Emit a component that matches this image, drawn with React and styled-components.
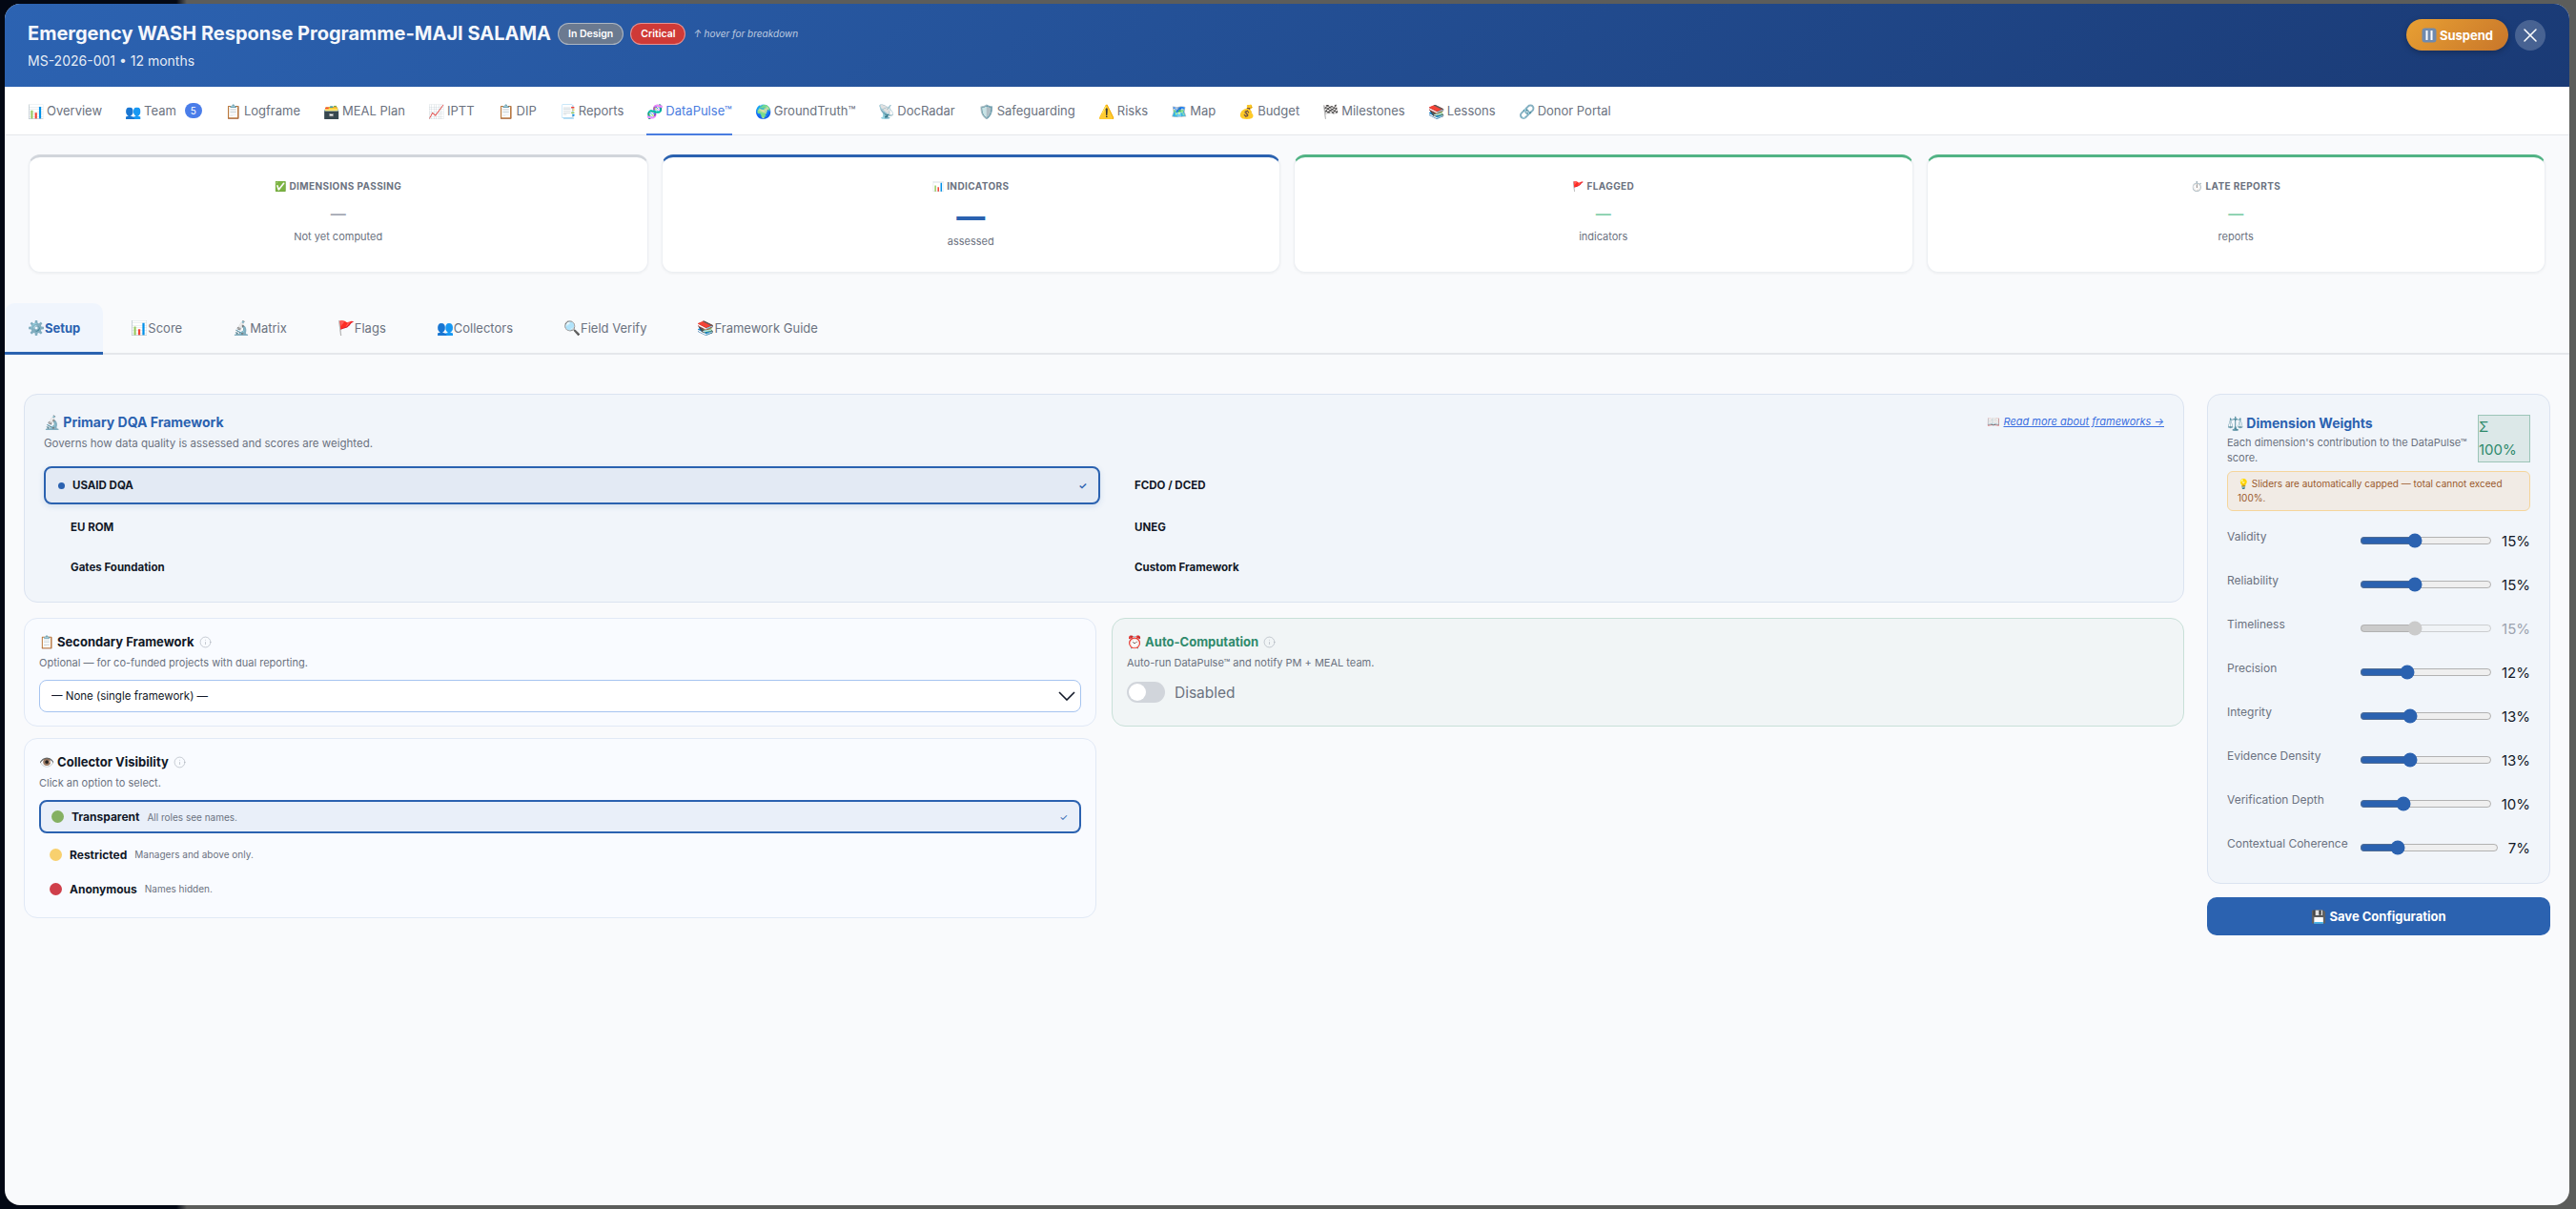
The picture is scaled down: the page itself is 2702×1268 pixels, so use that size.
import React from "react";
import styled, { createGlobalStyle } from "styled-components";
import { X, Info } from "lucide-react";

const Global = createGlobalStyle`
  html, body { margin: 0; padding: 0; height: 100%; }
  body { font-family: Inter, "Noto Sans", sans-serif; color: #111827; overflow: hidden; }
  * { box-sizing: border-box; }
`;

const Backdrop = styled.div`
  width: 2702px; height: 1268px; padding: 4px 7px 4px 5px;
  background: linear-gradient(to right, #030814 0, #030814 185px, #5c5d5b 196px);
`;
const Modal = styled.div`
  height: 100%; border-radius: 16px; overflow: hidden; background: #f9fafc;
  display: flex; flex-direction: column;
`;
const Header = styled.header`
  height: 87px; padding: 16px 25px 0 24px; display: flex; justify-content: space-between; align-items: flex-start;
  background: linear-gradient(135deg, #2c63b2, #1a3a75); color: #fff;
`;
const TitleLine = styled.div`display: flex; align-items: center; gap: 7px; height: 30px;`;
const Title = styled.h1`margin: 0; font-size: 20px; font-weight: 700; color: #f4f7fc;`;
const Badge = styled.span`
  font-size: 10.5px; font-weight: 600; height: 23px; padding: 0 10px; border-radius: 12px; display: inline-flex; align-items: center;
  color: #fff; background: ${p => p.$bg}; border: 1px solid rgba(255,255,255,.45);
`;
const Hover = styled.span`font-size: 10px; font-style: italic; color: rgba(255,255,255,.7); margin-left: 1px;`;
const SubLine = styled.div`font-size: 14px; margin-top: 5px; color: rgba(255,255,255,.9);`;
const HeadActions = styled.div`display: flex; align-items: center; gap: 7px;`;
const Suspend = styled.button`
  height: 33px; width: 107px; border: 0; border-radius: 17px; color: #fff; font: 700 13px Inter, sans-serif;
  background: linear-gradient(135deg, #e8a033, #c8762a); box-shadow: 0 2px 6px rgba(0,0,0,.25);
  display: flex; align-items: center; justify-content: center; gap: 3px; padding: 0;
`;
const CloseBtn = styled.button`
  width: 32px; height: 32px; border-radius: 50%; border: 0; color: #fff; background: rgba(255,255,255,.2);
  display: flex; align-items: center; justify-content: center; padding: 0;
`;
const Nav = styled.nav`
  height: 50px; margin-top: 1px; background: #fff; border-bottom: 1px solid #e5e7eb; display: flex; gap: 24px; padding: 0 24px;
`;
const NavItem = styled.div`
  display: flex; align-items: center; font-size: 13px; font-weight: 400; margin-bottom: -1px;
  color: ${p => p.$active ? "#4a7de0" : "#6b7280"};
  border-bottom: 2px solid ${p => p.$active ? "#4a7de0" : "transparent"};
`;
const NavEmoji = styled.span`font-size: 14px; margin-right: 3px;`;
const Count = styled.span`
  width: 18px; height: 16px; border-radius: 8px; background: #4a7de9; color: #fff; font-size: 10px;
  display: inline-flex; align-items: center; justify-content: center; margin-left: 9px;
`;
const Kpis = styled.section`display: grid; grid-template-columns: repeat(4, 1fr); gap: 14px; padding: 20px 25px 0;`;
const Kpi = styled.div`
  height: 124px; background: #fff; border-radius: 12px; border: 1px solid #eceff3; border-top: 3px solid ${p => p.$c};
  box-shadow: 0 1px 3px rgba(0,0,0,.05); display: flex; flex-direction: column; align-items: center; padding-top: 22px;
`;
const KpiLabel = styled.div`font-size: 10px; font-weight: 700; letter-spacing: .4px; color: #6b7280; text-transform: uppercase; height: 16px; display:flex; align-items:center; white-space: pre;`;
const KpiValue = styled.div`
  font-size: ${p => p.$big ? 30 : 16}px; font-weight: ${p => p.$big ? 800 : 700}; color: ${p => p.$c}; line-height: ${p => p.$big ? 31 : 24}px; margin-top: 9px;
`;
const KpiSub = styled.div`font-size: 11px; color: #6b7280; margin-top: ${p => p.$big ? 3 : 5}px;`;
const SubTabs = styled.div`display: flex; gap: 5px; margin-top: 32px; border-bottom: 2px solid #e5e7eb; height: 54px;`;
const SubTab = styled.div`
  padding: 0 24px; display: flex; align-items: center; font-size: 13px; font-weight: ${p => p.$active ? 700 : 400};
  color: ${p => p.$active ? "#2b62b0" : "#6b7280"}; border-radius: 10px 10px 0 0; margin-bottom: -2px;
  background: ${p => p.$active ? "#f0f5fd" : "transparent"}; border-bottom: 3px solid ${p => p.$active ? "#2b62b0" : "transparent"};
`;
const SubEmoji = styled.span`font-size: 14.5px;`;
const Body = styled.div`display: grid; grid-template-columns: 1fr 360px; gap: 24px; padding: 41px 20px 0;`;
const LeftCol = styled.div`display: grid; grid-template-columns: 1fr 1fr; gap: 12px 16px; align-items: start; align-content: start;`;
const Panel = styled.section`
  grid-column: ${p => p.$wide ? "1 / -1" : "auto"}; border-radius: 14px; border: 1px solid ${p => p.$bd || "#e1e9f6"};
  background: ${p => p.$bg || "#f9fbff"}; padding: ${p => p.$pad || "15px 15px 14px"};
  height: ${p => p.$h}px; margin-bottom: ${p => p.$wide ? 4 : 0}px;
`;
const PanelHead = styled.div`display: flex; justify-content: space-between; align-items: center;`;
const PanelTitle = styled.h3`
  margin: 0; font-size: ${p => p.$s || 13}px; font-weight: 700; color: ${p => p.$c || "#111827"}; display: flex; align-items: center; height: 18px; white-space: pre;
`;
const Muted = styled.p`margin: ${p => p.$m || "5px 0 0"}; font-size: ${p => p.$s || 11}px; color: #6b7280; line-height: ${p => p.$lh || "16px"};`;
const LinkRow = styled.span`font-size: 11px;`;
const Link = styled.a`font-size: 11px; font-style: italic; color: #3b6fe0; text-decoration: underline;`;
const OptionGrid = styled.div`display: grid; grid-template-columns: 1fr 1fr; gap: 6px 8px; margin-top: 16px; align-items: center;`;
const FrameOption = styled.div`
  height: ${p => p.$sel ? 40 : 36}px; border-radius: 8px; display: flex; align-items: center; gap: 8px; font-size: 11.5px; font-weight: 700;
  padding: 0 12px 0 ${p => p.$sel ? 13 : 26}px; color: #111827;
  border: 2px solid ${p => p.$sel ? "#2b62b0" : "transparent"}; background: ${p => p.$sel ? "#e3eaf4" : "transparent"};
  box-shadow: ${p => p.$sel ? "0 2px 6px rgba(43,98,176,.15)" : "none"};
`;
const Dot = styled.span`width: ${p => p.$s}px; height: ${p => p.$s}px; border-radius: 50%; background: ${p => p.$c}; flex: none;`;
const Check = styled.span`margin-left: auto; color: #2b62b0; font-size: 10px;`;
const SelectWrap = styled.div`position: relative; margin-top: 10px;`;
const Select = styled.select`
  width: 100%; height: 34px; appearance: none; background: #fff; border: 1.5px solid #a6c4f0; border-radius: 8px; padding: 0 12px;
  font: 400 11.5px Inter, sans-serif; color: #111827;
`;
const Chevron = styled.svg`position: absolute; right: 6px; top: 12px; pointer-events: none;`;
const InfoMark = styled.span`color: #9ca3af; display: inline-flex; margin-left: 5px;`;
const ToggleRow = styled.div`display: flex; align-items: center; gap: 10px; margin-top: 12px; font-size: 15.5px; color: #6b7280;`;
const Toggle = styled.span`width: 40px; height: 22px; border-radius: 11px; background: #d1d5db; display: flex; align-items: center; padding: 2px;`;
const Knob = styled.span`width: 18px; height: 18px; border-radius: 50%; background: #fff;`;
const VisList = styled.div`display: flex; flex-direction: column; margin-top: 10px;`;
const VisOption = styled.div`
  height: ${p => p.$sel ? 35 : 36}px; margin-bottom: ${p => p.$sel ? 4 : 0}px; border-radius: 8px; display: flex; align-items: center; gap: 8px; padding: 0 12px 0 ${p => p.$sel ? 11 : 9}px;
  border: 2px solid ${p => p.$sel ? "#2b62b0" : "transparent"}; background: ${p => p.$sel ? "#e9eff9" : "transparent"};
`;
const VisName = styled.b`font-size: 12px; font-weight: 700; color: #111827;`;
const VisDesc = styled.span`font-size: 10px; color: #6b7280;`;
const Side = styled.aside`display: flex; flex-direction: column; gap: 14px;`;
const WeightHead = styled.div`display: flex; gap: 8px; justify-content: space-between;`;
const SumBox = styled.div`
  width: 55px; height: 50px; margin-top: 1px; flex: none; background: #dce8e8; border: 1px solid #9cc5b8; color: #2f8a6c; font-size: 15px; line-height: 24px;
`;
const Note = styled.div`
  margin-top: 6px; border-radius: 6px; background: #f1ebe5; border: 1px solid #f5d59b; color: #9a5a2d; font-size: 10px; line-height: 15px; padding: 5px 10px;
`;
const Rows = styled.div`display: flex; flex-direction: column; gap: 22px; margin-top: 19px;`;
const Row = styled.div`display: flex; align-items: center; gap: 10px; height: 24px;`;
const RowLabel = styled.span`width: 129px; flex: none; font-size: 12px; color: #6b7280; align-self: flex-start; line-height: 16px;`;
const Range = styled.input`
  flex: 1; min-width: 0; margin: 0; height: 16px; accent-color: #2b62b0;
`;
const RowValue = styled.span`font-size: 15px; color: ${p => p.$off ? "#9ca3af" : "#111827"};`;
const SaveBtn = styled.button`
  height: 40px; border: 0; border-radius: 10px; background: #2b62b0; color: #fff; font: 700 13px Inter, sans-serif;
`;

const navItems = [["📊", "Overview"], ["👥", "Team"], ["📋", "Logframe"], ["🗃️", "MEAL Plan"], ["📈", "IPTT"], ["📋", "DIP"], ["📑", "Reports"], ["🧬", "DataPulse™"], ["🌍", "GroundTruth™"], ["📡", "DocRadar"], ["🛡️", "Safeguarding"], ["⚠️", "Risks"], ["🗺️", "Map"], ["💰", "Budget"], ["🏁", "Milestones"], ["📚", "Lessons"], ["🔗", "Donor Portal"]];
const subTabs = [["⚙️", "Setup"], ["📊", "Score"], ["🔬", "Matrix"], ["🚩", "Flags"], ["👥", "Collectors"], ["🔍", "Field Verify"], ["📚", "Framework Guide"]];
const kpis = [
  { c: "#d1d5db", l: "✅ Dimensions Passing", v: "#a4a8b3", s: "Not yet computed" },
  { c: "#2b62b0", l: "📊 Indicators", v: "#2b62b0", s: "assessed", big: true },
  { c: "#52b385", l: "🚩 Flagged", v: "#86d0ac", s: "indicators" },
  { c: "#52b385", l: "⏱️ Late Reports", v: "#86d0ac", s: "reports" },
];
const frames = ["USAID DQA", "FCDO / DCED", "EU ROM", "UNEG", "Gates Foundation", "Custom Framework"];
const weights = [
  ["Validity", 15, 41], ["Reliability", 15, 41], ["Timeliness", 15, 41, true], ["Precision", 12, 34.4],
  ["Integrity", 13, 37], ["Evidence Density", 13, 37], ["Verification Depth", 10, 31], ["Contextual Coherence", 7, 25],
];

export default function App() {
  return (
    <Backdrop>
      <Global />
      <Modal>
        <Header>
          <div>
            <TitleLine>
              <Title>Emergency WASH Response Programme-MAJI SALAMA</Title>
              <Badge $bg="#6b7a90">In Design</Badge>
              <Badge $bg="#cf3a37">Critical</Badge>
              <Hover>↑ hover for breakdown</Hover>
            </TitleLine>
            <SubLine>MS-2026-001 • 12 months</SubLine>
          </div>
          <HeadActions>
            <Suspend>
              <svg width="16" height="16" viewBox="0 0 16 16" aria-hidden="true">
                <rect x="0.5" y="0.5" width="15" height="15" rx="3" fill="#6f8aae" />
                <rect x="4.5" y="3" width="2" height="10" fill="#fff" />
                <rect x="9.5" y="3" width="2" height="10" fill="#fff" />
              </svg>
              Suspend
            </Suspend>
            <CloseBtn><X size={24} strokeWidth={1.5} /></CloseBtn>
          </HeadActions>
        </Header>
        <Nav>
          {navItems.map(([e, n], i) => (
            <NavItem key={n} $active={i === 7}><NavEmoji>{e}</NavEmoji>{n}{i === 1 && <Count>5</Count>}</NavItem>
          ))}
        </Nav>
        <Kpis>
          {kpis.map(k => (
            <Kpi key={k.l} $c={k.c}>
              <KpiLabel>{k.l}</KpiLabel>
              <KpiValue $c={k.v} $big={k.big}>—</KpiValue>
              <KpiSub $big={k.big}>{k.s}</KpiSub>
            </Kpi>
          ))}
        </Kpis>
        <SubTabs>
          {subTabs.map(([e, t], i) => <SubTab key={t} $active={i === 0}><SubEmoji>{e}</SubEmoji>{t}</SubTab>)}
        </SubTabs>
        <Body>
          <LeftCol>
            <Panel $wide $bg="#f1f5fa" $bd="#dbe3f0" $h={219} $pad="19px 20px 0">
              <PanelHead>
                <PanelTitle $s={14} $c="#2b62b0">🔬 Primary DQA Framework</PanelTitle>
                <LinkRow>📖 <Link>Read more about frameworks →</Link></LinkRow>
              </PanelHead>
              <Muted $s={11.5} $m="6px 0 0">Governs how data quality is assessed and scores are weighted.</Muted>
              <OptionGrid>
                {frames.map((f, i) => (
                  <FrameOption key={f} $sel={i === 0}>
                    {i === 0 && <Dot $s={7} $c="#2b62b0" />}{f}{i === 0 && <Check>✓</Check>}
                  </FrameOption>
                ))}
              </OptionGrid>
            </Panel>
            <Panel $h={114}>
              <PanelTitle>📋 Secondary Framework<InfoMark><Info size={13} strokeWidth={1} /></InfoMark></PanelTitle>
              <Muted>Optional — for co-funded projects with dual reporting.</Muted>
              <SelectWrap>
                <Select defaultValue="none"><option value="none">— None (single framework) —</option></Select>
                <Chevron width="18" height="10" viewBox="0 0 18 10" aria-hidden="true">
                  <polyline points="1,1 9,9 17,1" fill="none" stroke="#111827" strokeWidth="1.6" />
                </Chevron>
              </SelectWrap>
            </Panel>
            <Panel $h={114} $bg="#f1f5f6" $bd="#c8e0d8">
              <PanelTitle $c="#2f8a6c">⏰ Auto-Computation<InfoMark><Info size={13} strokeWidth={1} /></InfoMark></PanelTitle>
              <Muted>Auto-run DataPulse™ and notify PM + MEAL team.</Muted>
              <ToggleRow><Toggle><Knob /></Toggle>Disabled</ToggleRow>
            </Panel>
            <Panel $h={189}>
              <PanelTitle>👁️ Collector Visibility<InfoMark><Info size={13} strokeWidth={1} /></InfoMark></PanelTitle>
              <Muted>Click an option to select.</Muted>
              <VisList>
                <VisOption $sel><Dot $s={13} $c="#84b062" /><VisName>Transparent</VisName><VisDesc>All roles see names.</VisDesc><Check>✓</Check></VisOption>
                <VisOption><Dot $s={13} $c="#f8d06e" /><VisName>Restricted</VisName><VisDesc>Managers and above only.</VisDesc></VisOption>
                <VisOption><Dot $s={13} $c="#cf3f4a" /><VisName>Anonymous</VisName><VisDesc>Names hidden.</VisDesc></VisOption>
              </VisList>
            </Panel>
          </LeftCol>
          <Side>
            <Panel $bg="#f1f5fa" $bd="#dbe3f0" $h={514} $pad="20px 20px 0">
              <WeightHead>
                <div>
                  <PanelTitle $s={14} $c="#2b62b0">⚖️ Dimension Weights</PanelTitle>
                  <Muted $m="4px 0 0">Each dimension's contribution to the DataPulse™ score.</Muted>
                </div>
                <SumBox>Σ 100%</SumBox>
              </WeightHead>
              <Note>💡 Sliders are automatically capped — total cannot exceed 100%.</Note>
              <Rows>
                {weights.map(([name, v, pos, off]) => (
                  <Row key={name}>
                    <RowLabel>{name}</RowLabel>
                    <Range type="range" min="0" max="100" defaultValue={pos} disabled={!!off} />
                    <RowValue $off={off}>{v}%</RowValue>
                  </Row>
                ))}
              </Rows>
            </Panel>
            <SaveBtn>💾 Save Configuration</SaveBtn>
          </Side>
        </Body>
      </Modal>
    </Backdrop>
  );
}
